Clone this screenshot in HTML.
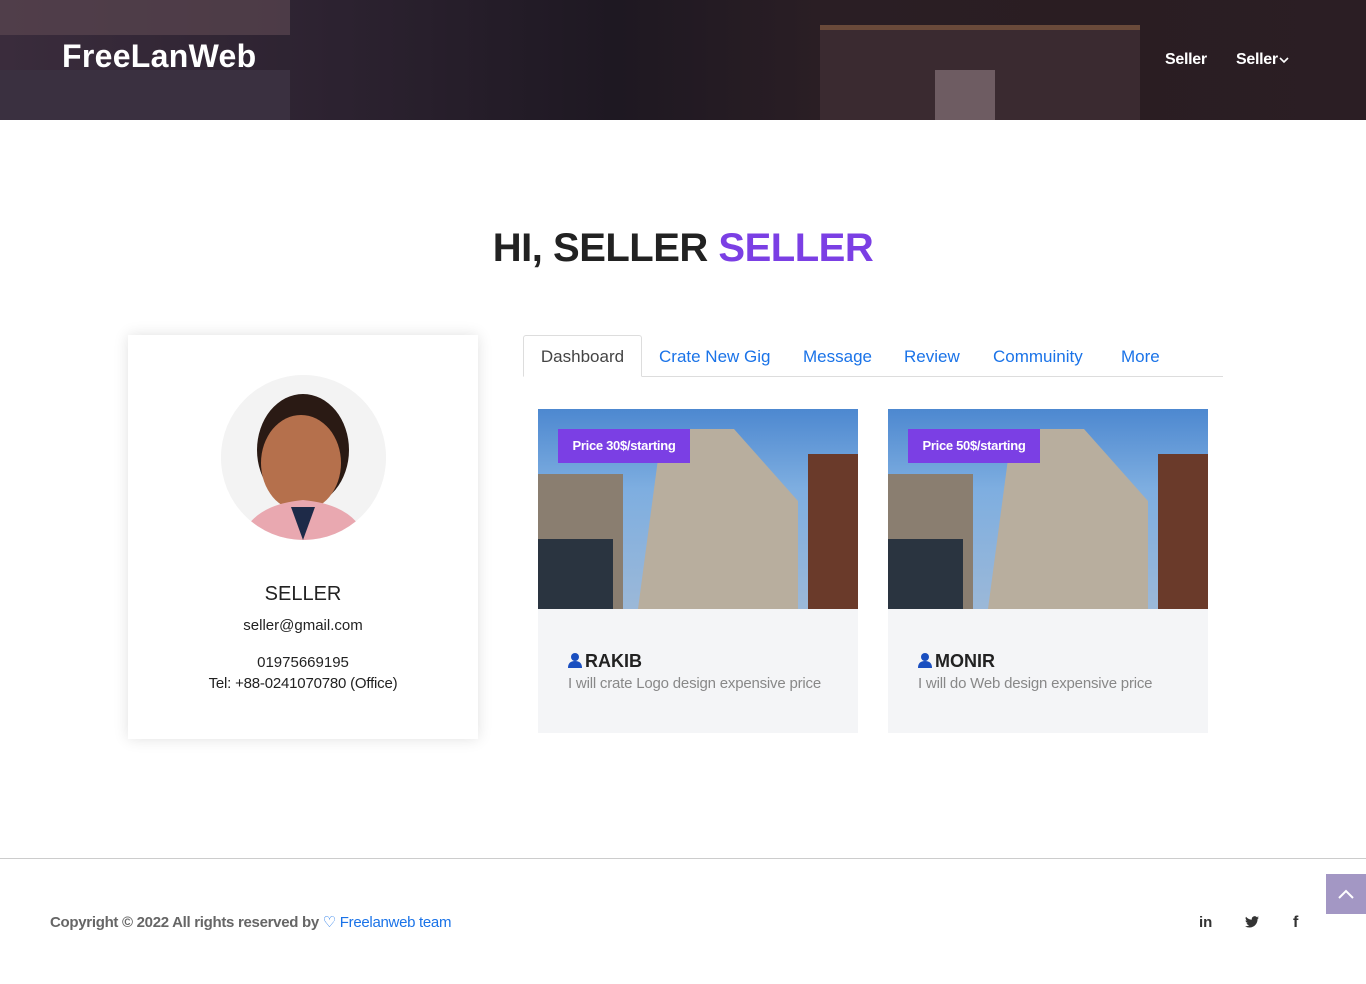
<!DOCTYPE html>
<html><head><meta charset="utf-8"><style>
*{margin:0;padding:0;box-sizing:border-box}
body{width:1366px;height:984px;background:#fff;font-family:"Liberation Sans",sans-serif;position:relative;overflow:hidden}
.hdr{position:absolute;left:0;top:0;width:1366px;height:120px;background:linear-gradient(90deg,#3a2c3c 0%,#2c2230 25%,#1e1822 45%,#2a1e24 60%,#2a1d22 80%,#2b1e24 100%)}
.hdr .b1{position:absolute;left:0;top:0;width:290px;height:35px;background:#5a4650;opacity:.7}
.hdr .b2{position:absolute;left:820px;top:30px;width:320px;height:90px;background:#3a2a30}
.hdr .b3{position:absolute;left:820px;top:25px;width:320px;height:5px;background:#6a4a3a}
.hdr .b4{position:absolute;left:935px;top:70px;width:60px;height:50px;background:#6e5c62}
.hdr .b5{position:absolute;left:0;top:70px;width:290px;height:50px;background:#3a3040}
.logo{position:absolute;left:62px;top:38px;color:#fff;font-weight:bold;font-size:32px;letter-spacing:0.3px}
.nav{position:absolute;top:50px;color:#fff;font-weight:bold;font-size:16px;letter-spacing:-0.3px}
h1{position:absolute;top:226px;left:0;width:1366px;text-align:center;font-size:40px;color:#222;font-weight:bold;letter-spacing:-0.5px}
h1 span{color:#7b3fe4}
.card{position:absolute;left:128px;top:335px;width:350px;height:404px;background:#fff;box-shadow:0 0 14px rgba(0,0,0,.12);text-align:center;color:#222}
.av{position:absolute;left:93px;top:40px;width:165px;height:165px;border-radius:50%;overflow:hidden;background:#f2f2f2}
.tabs{position:absolute;left:523px;top:335px;width:700px;height:42px;border-bottom:1px solid #ddd}
.tab{position:absolute;top:12px;font-size:17px;color:#1a73e8}
.t0{left:0;top:0;width:119px;height:42px;border:1px solid #ddd;border-bottom:1px solid #fff;background:#fff;color:#444;padding-top:11px;text-align:center;border-radius:3px 3px 0 0}
.gig{position:absolute;top:409px;width:320px;height:324px;background:#f4f5f7}
.img{position:absolute;left:0;top:0;width:320px;height:200px;background:linear-gradient(180deg,#4d88d0 0%,#7eaee0 40%,#9bb8d8 100%);overflow:hidden}
.bld{position:absolute;background:#b8ae9e}
.price{position:absolute;left:20px;top:20px;width:132px;height:34px;background:#7b3fe4;color:#fff;font-size:13px;font-weight:bold;line-height:34px;text-align:center;letter-spacing:-0.3px}
.nm{position:absolute;left:30px;top:242px;font-size:18px;font-weight:bold;color:#222}
.nm svg{vertical-align:-1px;margin-right:3px}
.ds{position:absolute;left:30px;top:266px;font-size:15px;color:#888;letter-spacing:-0.2px}
.foot{position:absolute;left:0;top:858px;width:1366px;border-top:1px solid #ccc}
</style></head><body>
<div class="hdr"><div class="b1"></div><div class="b5"></div><div class="b2"></div><div class="b3"></div><div class="b4"></div></div>
<div class="logo">FreeLanWeb</div>
<div class="nav" style="left:1165px;top:51px">Seller</div>
<div class="nav" style="left:1236px;top:51px">Seller<svg width="10" height="8" style="margin-left:1px"><path d="M1 2 L5 6 L9 2" stroke="#fff" stroke-width="1.6" fill="none"/></svg></div>
<h1>HI, SELLER <span>SELLER</span></h1>
<div class="card">
<div class="av"><svg width="165" height="165"><rect width="165" height="165" fill="#f3f3f3"/><ellipse cx="82" cy="75" rx="46" ry="56" fill="#2a1a14"/><ellipse cx="80" cy="88" rx="40" ry="48" fill="#b5704c"/><path d="M20 165 Q30 130 82 125 Q135 130 145 165Z" fill="#e9a8b0"/><path d="M70 132 L82 165 L94 132Z" fill="#1e2a48"/></svg></div>
<div style="position:absolute;top:248px;width:100%;font-size:20px">SELLER</div>
<div style="position:absolute;top:282px;width:100%;font-size:15px">seller@gmail.com</div>
<div style="position:absolute;top:319px;width:100%;font-size:15px">01975669195</div>
<div style="position:absolute;top:340px;width:100%;font-size:15px;letter-spacing:-0.2px">Tel: +88-0241070780 (Office)</div>
</div>
<div class="tabs">
<div class="tab t0">Dashboard</div>
<div class="tab" style="left:136px">Crate New Gig</div>
<div class="tab" style="left:280px">Message</div>
<div class="tab" style="left:381px">Review</div>
<div class="tab" style="left:470px">Commuinity</div>
<div class="tab" style="left:598px">More</div>
</div>
<div class="gig" style="left:538px"><div class="img"><div class="bld" style="left:100px;top:20px;width:160px;height:180px;clip-path:polygon(15% 0,60% 0,100% 40%,100% 100%,0 100%)"></div><div class="bld" style="left:0;top:65px;width:85px;height:135px;background:#8a7e70"></div><div class="bld" style="left:0;top:130px;width:75px;height:70px;background:#2a3440"></div><div class="bld" style="left:270px;top:45px;width:50px;height:155px;background:#6a3a2a"></div></div><div class="price">Price 30$/starting</div><div class="nm"><svg width="14" height="15"><circle cx="7" cy="4" r="4" fill="#1a4fc0"/><path d="M0 15 Q0 8 7 8 Q14 8 14 15Z" fill="#1a4fc0"/></svg>RAKIB</div><div class="ds">I will crate Logo design expensive price</div></div>
<div class="gig" style="left:888px"><div class="img"><div class="bld" style="left:100px;top:20px;width:160px;height:180px;clip-path:polygon(15% 0,60% 0,100% 40%,100% 100%,0 100%)"></div><div class="bld" style="left:0;top:65px;width:85px;height:135px;background:#8a7e70"></div><div class="bld" style="left:0;top:130px;width:75px;height:70px;background:#2a3440"></div><div class="bld" style="left:270px;top:45px;width:50px;height:155px;background:#6a3a2a"></div></div><div class="price">Price 50$/starting</div><div class="nm"><svg width="14" height="15"><circle cx="7" cy="4" r="4" fill="#1a4fc0"/><path d="M0 15 Q0 8 7 8 Q14 8 14 15Z" fill="#1a4fc0"/></svg>MONIR</div><div class="ds">I will do Web design expensive price</div></div>
<div class="foot"></div>
<div style="position:absolute;left:50px;top:913px;font-size:15px;color:#666;font-weight:bold;letter-spacing:-0.3px">Copyright © 2022 All rights reserved by <span style="color:#1a73e8;font-weight:normal">♡ Freelanweb team</span></div>
<div style="position:absolute;left:1199px;top:914px;font-size:15px;font-weight:bold;color:#333">in</div>
<svg style="position:absolute;left:1245px;top:916px" width="14" height="12" viewBox="0 0 24 20"><path d="M24 2.4a10 10 0 0 1-2.8.8A5 5 0 0 0 23.3.4a10 10 0 0 1-3.1 1.2A4.9 4.9 0 0 0 11.8 6 14 14 0 0 1 1.7.9a4.9 4.9 0 0 0 1.5 6.6A4.9 4.9 0 0 1 1 6.9a4.9 4.9 0 0 0 3.900 4.9 4.9 4.9 0 0 1-2.2.1 4.9 4.9 0 0 0 4.6 3.4A9.9 9.9 0 0 1 0 17.3 14 14 0 0 0 7.5 19.5c9 0 14-7.5 14-14v-.6A10 10 0 0 0 24 2.4z" fill="#333"/></svg>
<div style="position:absolute;left:1293px;top:914px;font-size:16px;font-weight:bold;color:#333">f</div>
<div style="position:absolute;left:1326px;top:874px;width:40px;height:40px;background:#a397c4"><svg width="40" height="40"><path d="M13 24 L20 17 L27 24" stroke="#fff" stroke-width="2" fill="none"/></svg></div>
</body></html>
